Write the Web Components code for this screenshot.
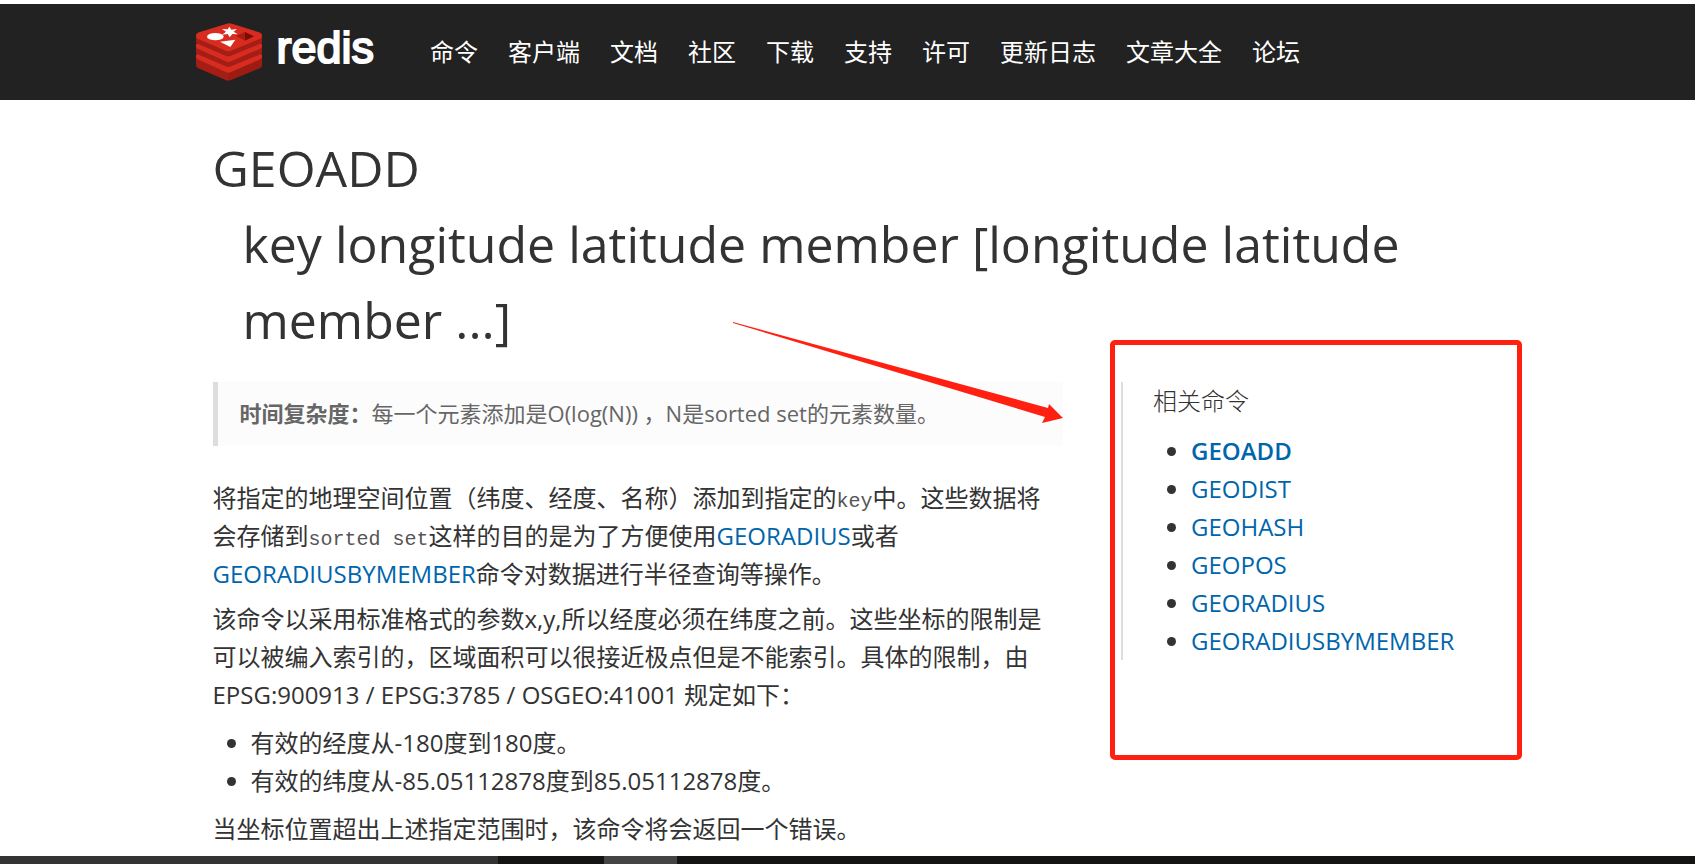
<!DOCTYPE html>
<html lang="zh-CN">
<head>
<meta charset="utf-8">
<title>GEOADD</title>
<style>
html, body { margin: 0; }
body {
  background: #fff; color: #333;
  font: 24px/38px "Open Sans", "Noto Sans CJK SC", sans-serif;
}
</style>
</head>
<body>
<redis-page></redis-page>
<script>
class BaseElement extends HTMLElement {
  constructor() {
    super();
    this.attachShadow({ mode: "open" }).innerHTML = this.constructor.markup;
  }
}

customElements.define("redis-logo", class extends BaseElement {
  static markup = `
<style>
:host { display: block; }
a { display: flex; align-items: center; gap: 15px; color: #fff; text-decoration: none;
  font: 400 45px/56px "Liberation Sans", sans-serif; }
span { padding-bottom: 8px; -webkit-text-stroke: 2px #fff; stroke-linejoin: round; }
svg { display: block; flex: none; }
</style>
<a href="#" aria-label="redis">
<svg width="66" height="58" viewBox="0 0 198 174" aria-hidden="true">
  <path fill="#a41e15" d="M0 100v26q0 6 5 9l84 36q8 3 16 0l88-36q5-3 5-9v-26z"/>
  <path fill="#8f1a12" d="M97 140L198 100v26q0 6-5 9l-88 36q-4 2-8 2z" opacity=".35"/>
  <path fill="#d82c20" d="M0 98q0-4 5-7l84-28h16l88 28q5 3 5 7v4q0 4-5 7l-88 38q-8 4-16 0L5 109q-5-3-5-7z"/>
  <path fill="#a41e15" d="M0 66v24q0 2 5 4l84 36q8 4 16 0l88-36q5-2 5-4V66z"/>
  <path fill="#d82c20" d="M0 66q0-4 5-7l84-28h16l88 28q5 3 5 7v4q0 4-5 7l-88 38q-8 4-16 0L5 77q-5-3-5-7z"/>
  <path fill="#a41e15" d="M0 36v22q0 2 5 4l84 36q8 4 16 0l88-36q5-2 5-4V36z"/>
  <path fill="#d82c20" d="M0 38q0-6 5-9L92 2q8-3 16 0l85 27q5 3 5 9t-5 9l-88 36q-8 4-16 0L5 47q-5-3-5-9z"/>
  <ellipse cx="58" cy="41" rx="25" ry="11" fill="#fff"/>
  <path fill="#fff" d="M100 11l6 9 17-2-10 8 12 8-16-1-8 10-6-10-17 2 12-9-12-8 17 1zM72 56l46-6-15 22z"/>
  <path fill="#7a0c00" d="M147 27l27 13-27 13z"/><path fill="#a81c10" d="M120 39l27-12v26z"/>
</svg>
<span>redis</span></a>`;
});

customElements.define("nav-link", class extends BaseElement {
  static markup = `
<style>
:host { display: block; }
a { color: #fff; text-decoration: none; white-space: nowrap; }
</style>
<a href="#"><slot></slot></a>`;
});

customElements.define("site-header", class extends BaseElement {
  static markup = `
<style>
:host { display: block; background: #222; }
.bar { max-width: 1304px; margin: 0 auto; min-height: 96px; display: flex; align-items: center; gap: 56px; }
nav { display: flex; flex-wrap: wrap; gap: 30px; }
</style>
<header class="bar">
<redis-logo></redis-logo>
<nav>
<nav-link>命令</nav-link><nav-link>客户端</nav-link><nav-link>文档</nav-link><nav-link>社区</nav-link><nav-link>下载</nav-link><nav-link>支持</nav-link><nav-link>许可</nav-link><nav-link>更新日志</nav-link><nav-link>文章大全</nav-link><nav-link>论坛</nav-link>
</nav>
</header>`;
});

customElements.define("command-title", class extends BaseElement {
  static markup = `
<style>
:host { display: block; margin-bottom: 24px; }
h1 { margin: 0; font-size: 50px; line-height: 76px; font-weight: 400; }
.args { display: block; padding-left: 30px; }
</style>
<h1><slot></slot><span class="args"><slot name="args"></slot></span></h1>`;
});

customElements.define("meta-note", class extends BaseElement {
  static markup = `
<style>
:host { display: block; border-left: 5px solid #ddd; background: #fcfcfc; color: #666;
  padding: 12px 22px 14px; margin-bottom: 33px; font-size: 22px; }
</style>
<slot></slot>`;
});

customElements.define("command-article", class extends BaseElement {
  static markup = `
<style>
:host { display: block; }
p { margin: 0 0 7px; }
ul { margin: 10px 0; padding-left: 38px; }
a { color: #0065ab; text-decoration: none; }
code { font: 20px/24px "Liberation Mono", monospace; color: #555; }
</style>
<meta-note><strong>时间复杂度：</strong>每一个元素添加是O(log(N)) ，N是sorted set的元素数量。</meta-note>
<p>将指定的地理空间位置（纬度、经度、名称）添加到指定的<code>key</code>中。这些数据将会存储到<code>sorted set</code>这样的目的是为了方便使用<a href="#">GEORADIUS</a>或者<a href="#">GEORADIUSBYMEMBER</a>命令对数据进行半径查询等操作。</p>
<p>该命令以采用标准格式的参数x,y,所以经度必须在纬度之前。这些坐标的限制是可以被编入索引的，区域面积可以很接近极点但是不能索引。具体的限制，由 EPSG:900913 / EPSG:3785 / OSGEO:41001 规定如下：</p>
<ul><li>有效的经度从-180度到180度。</li><li>有效的纬度从-85.05112878度到85.05112878度。</li></ul>
<p>当坐标位置超出上述指定范围时，该命令将会返回一个错误。</p>`;
});

customElements.define("callout-frame", class extends BaseElement {
  static markup = `
<style>
:host { position: absolute; inset: -42px -39px -100px -13px; box-sizing: border-box;
  border: 5px solid #ff2012; border-radius: 5px; pointer-events: none; }
</style>`;
});

customElements.define("callout-arrow", class extends BaseElement {
  static markup = `
<style>
:host { position: absolute; top: -61px; right: calc(100% + 60px); pointer-events: none; }
svg { display: block; }
</style>
<svg width="331" height="102" viewBox="0 0 331 102" aria-hidden="true">
<path fill="#ff2012" d="M1 1L316 87l1-4 14 14-21 5 3-6L1 2z"/></svg>`;
});

customElements.define("related-commands", class extends BaseElement {
  static markup = `
<style>
:host { display: block; position: relative; border-left: 2px solid #ddd; padding-left: 30px; }
h2 { margin: 0 0 12px; font-size: 24px; line-height: 38px; font-weight: 300; }
ul { margin: 0; padding-left: 38px; }
a { color: #0065ab; text-decoration: none; }
.current { font-weight: 600; }
</style>
<h2>相关命令</h2>
<ul>
<li><a class="current" href="#">GEOADD</a></li>
<li><a href="#">GEODIST</a></li>
<li><a href="#">GEOHASH</a></li>
<li><a href="#">GEOPOS</a></li>
<li><a href="#">GEORADIUS</a></li>
<li><a href="#">GEORADIUSBYMEMBER</a></li>
</ul>
<slot></slot>`;
});

customElements.define("task-strip", class extends BaseElement {
  static markup = `
<style>
:host { display: flex; height: 8px; background: #141413; }
.search { flex: 0 0 498px; background: #333; }
.active { flex: 0 0 73px; margin-left: 106px; background: #444; }
</style>
<div class="search"></div><div class="active"></div>`;
});

customElements.define("redis-page", class extends BaseElement {
  static markup = `
<style>
:host { display: flex; flex-direction: column; box-sizing: border-box; min-height: 100vh; padding-top: 4px; }
main { box-sizing: border-box; width: 100%; max-width: 1304px; margin: 0 auto; padding: 30px 17px 0; }
.columns { display: grid; grid-template-columns: minmax(0, 40fr) minmax(0, 17fr); column-gap: 58px; align-items: start; }
task-strip { margin-top: auto; }
</style>
<site-header></site-header>
<main>
<command-title>GEOADD<span slot="args">key longitude latitude member [longitude latitude member ...]</span></command-title>
<div class="columns">
<command-article></command-article>
<related-commands><callout-frame></callout-frame><callout-arrow></callout-arrow></related-commands>
</div>
</main>
<task-strip></task-strip>`;
});
</script>
</body>
</html>
